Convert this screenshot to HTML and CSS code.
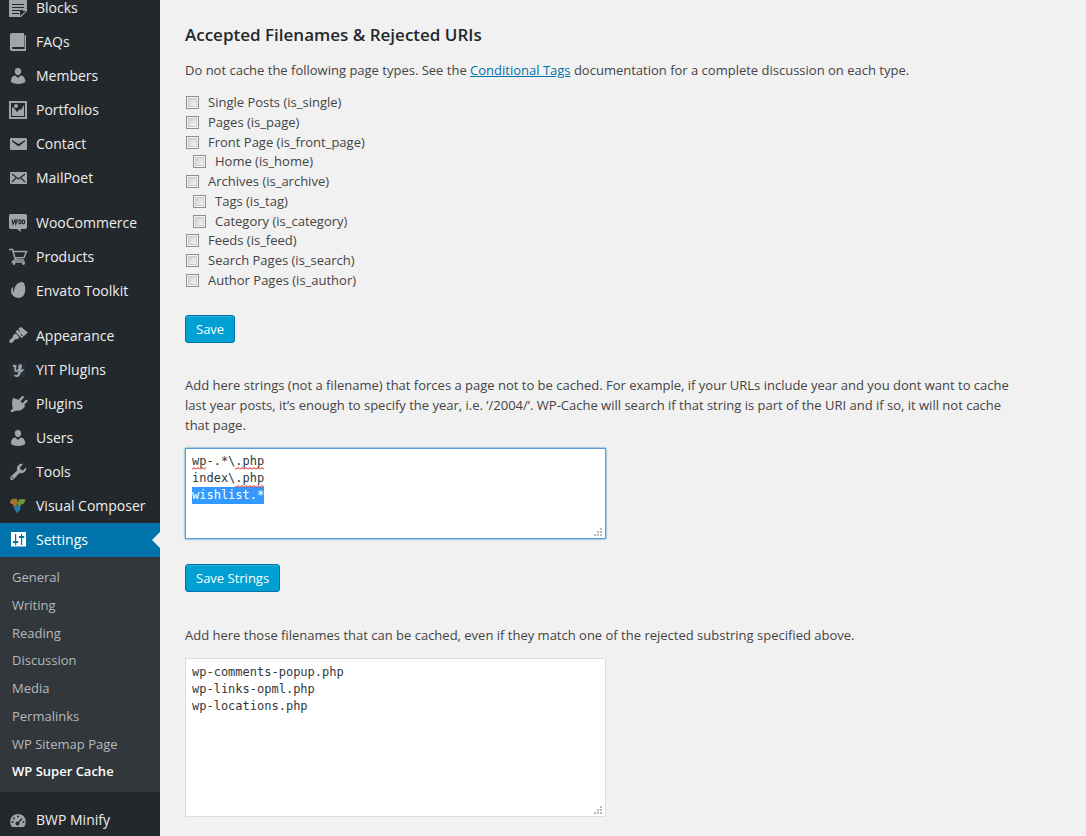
FILE: index.html
```html
<!DOCTYPE html>
<html lang="en">
<head>
<meta charset="utf-8">
<title>WP Super Cache Settings</title>
<link rel="stylesheet" href="styles.css">
</head>
<body>
<div class="admin">
<nav class="sidebar" aria-label="Main menu">
<ul class="menu">
<li><a href="#"><svg class="icon" viewBox="0 0 20 20"><path fill-rule="evenodd" d="M1 0h18v13l-6 6H1zM4 6v1h12V6zM4 9v1h12V9zM4 12v1h11v-1zM4 15v1h7v-1zM12 18v-5h6z"/></svg>Blocks</a></li>
<li><a href="#"><svg class="icon" viewBox="0 0 20 20"><path d="M4 1h12v14H5c-1.300 0-1.300 2 0 2h11.500V3H18v16H4c-1.500 0-2-1-2-2V3c0-1 .8-2 2-2z"/></svg>FAQs</a></li>
<li><a href="#"><svg class="icon" viewBox="0 0 20 20"><path d="M10 9.200c-1.900 0-3.200-1.800-3.200-3.900S8 2 10 2s3.200 1.200 3.200 3.300S11.900 9.200 10 9.200zM3 16c0-3.300 1-6.200 4.300-6.400L10 12l2.700-2.400C16 9.800 17.300 12.700 17.300 16c-3 2.600-11.300 2.600-14.300 0z"/></svg>Members</a></li>
<li><a href="#"><svg class="icon" viewBox="0 0 20 20"><path fill-rule="evenodd" d="M1 1h18v18H1zM3 3v14h14V3zM4 16V7l2 1 3 4 3-3 1 1 3-5v11zM8 4a2 2 0 1 1 0 4 2 2 0 0 1 0-4z"/></svg>Portfolios</a></li>
<li><a href="#"><svg class="icon" viewBox="0 0 20 20"><path fill-rule="evenodd" d="M3 4h14c1 0 2 .5 2 1.500v9c0 1-.5 1.500-1.500 1.500h-14C2.500 16 2 15.500 2 14.500v-9C2 4.500 2.300 4 3 4zM4 6v1.500l6.500 5L17 7.500V6l-6.500 4z"/></svg>Contact</a></li>
<li><a href="#"><svg class="icon" viewBox="0 0 20 20"><rect x="2" y="4" width="17" height="12" rx="1"/><path class="cut" d="m4 6 6.500 5L17 6M4 14l4-4M17 14l-4-4"/></svg>MailPoet</a></li>
<li class="separator" role="presentation"></li>
<li><a href="#"><svg class="icon" viewBox="0 0 20 20"><path d="M3 1h14c1.300 0 2 .8 2 2v11c0 1.300-.7 2-2 2h-4.500l.5 3-4-3H3c-1.300 0-2-.7-2-2V3c0-1.200.7-2 2-2z"/><path class="cut" d="M4 6.500 5 11l2-4 .8 4L9.500 6"/><ellipse class="cut" cx="12" cy="8.800" rx="1.200" ry="2"/><ellipse class="cut" cx="15.500" cy="8.800" rx="1.200" ry="2"/></svg>WooCommerce</a></li>
<li><a href="#"><svg class="icon line" viewBox="0 0 20 20"><path d="M1 2.500h3.500l3 10.500H16M5 4.500h13.500L16 10.500l-9 .500"/><path d="M6.500 13 4.500 15H17"/><circle cx="6" cy="16.500" r=".7"/><circle cx="15.500" cy="16.500" r=".7"/></svg>Products</a></li>
<li><a href="#"><svg class="icon" viewBox="0 0 20 20"><path d="M14.500 1c2 .8 3 4.500 2.700 8.500-.3 4.500-3 7.700-7 7.500-3.200-.2-6-2-6.800-5-.6-2.200-.3-4 .8-5.500.5-.6 1-.3.900.5-.2 2 .2 3.500 1 4.500C5.500 5.500 10 .5 14.500 1z"/></svg>Envato Toolkit</a></li>
<li class="separator" role="presentation"></li>
<li><a href="#"><svg class="icon" viewBox="0 0 20 20"><path d="M10.500 2.500 13 1l7 5.500-4 3.500h-2.500zM9.500 3.500l-2 2.500 6 6 2-1.300zM8 7.500l3.500 4-2 1.500-2.500.5-2.300 2.800c-.8.900-2 1-2.800.3s-.9-1.700-.2-2.600l3-2.800.7-2.500z"/></svg>Appearance</a></li>
<li><a href="#"><svg class="icon" viewBox="0 0 20 20"><rect class="tile" x="3" y="3" width="14" height="14"/><path class="brush" d="M5 6h2.500l-.3 3.500c0 2.500 3 2 3.800-.5l.5-3.500h1.500l-1 6.500c-.5 3.500-3.500 5-5.500 3.200M10 13.500l5.500-4"/></svg>YIT Plugins</a></li>
<li><a href="#"><svg class="icon" viewBox="0 0 20 20"><path d="M10.600 5.700 13.700 2.400c1.500-1.300 3 .2 1.800 1.700l-3 3.200 2 2 3-3.200c1.500-1.200 3 .3 1.700 1.700l-3.100 3.200 1.100 1-1.300 1.800c-2 2.700-5.300 3.500-8 2.700L4.500 18c-.8.600-2.300-.8-1.700-1.700L5 14.500C4 12 3.500 8 5 4z"/></svg>Plugins</a></li>
<li><a href="#"><svg class="icon" viewBox="0 0 20 20"><path d="M10 9.200c-1.900 0-3.200-1.800-3.200-3.900S8 2 10 2s3.200 1.200 3.200 3.300S11.900 9.200 10 9.200zM3 16c0-3.300 1-6.200 4.300-6.400L10 12l2.700-2.400C16 9.800 17.300 12.700 17.300 16c-3 2.600-11.300 2.600-14.300 0z"/></svg>Users</a></li>
<li><a href="#"><svg class="icon" viewBox="0 0 20 20"><path fill-rule="evenodd" d="M16.700 9.800c-1.400 1.500-3.500 1.800-5.200 1.100L5.700 17.300c-.9.900-2.200.9-3 .1s-.8-2.200.1-3L9.200 8.600c-.7-1.800-.4-3.900 1.100-5.300 1.400-1.400 3-1.800 4.700-1.200l-3 3.300.6 2.200 2.400.8 3.100-3.200c.6 1.600.1 3.200-1.400 4.600zM4.200 15a.8.800 0 1 0 .1 1.600.8.800 0 0 0-.1-1.600z"/></svg>Tools</a></li>
<li><a href="#"><svg class="icon" viewBox="0 0 20 20"><path fill="#a3752b" d="M2 6c0-3 4-4 7-3l1 4-2 4-3-.5V8C3 8 2 7.500 2 6z"/><path fill="#6d963a" d="M10 7c0-3 2-4.500 4.500-4l3.500.5-1 1c0 2.500-2 4-4 4l-1 2.500-2-1z"/><path fill="#217fae" d="M7 10c2-1 5-.5 5.500 2 .3 2-1 3-2.500 4L9 18l-1-3c-2-1-2.500-4-1-5z"/></svg>Visual Composer</a></li>
<li class="current"><a href="#" aria-current="true"><svg class="icon" viewBox="0 0 20 20"><path fill-rule="evenodd" d="M3 2h15v14.500H3zM7 4v7H5v2h2v2h1.200v-2h2v-2h-2V4zM13 4v2h-2v2h2v7h1.200V8h2V6h-2V4z"/></svg>Settings</a>
<ul class="submenu">
<li><a href="#">General</a></li>
<li><a href="#">Writing</a></li>
<li><a href="#">Reading</a></li>
<li><a href="#">Discussion</a></li>
<li><a href="#">Media</a></li>
<li><a href="#">Permalinks</a></li>
<li><a href="#">WP Sitemap Page</a></li>
<li><a href="#" class="active" aria-current="page">WP Super Cache</a></li>
</ul></li>
<li class="separator" role="presentation"></li>
<li><a href="#"><svg class="icon" viewBox="0 0 20 20"><path d="M4 17C.5 13 2 4 10 4s9.500 9 6 13z"/><path class="cut" d="m9.500 13.500 4.500-5"/><g class="dot"><circle cx="9.500" cy="13.500" r="2"/><circle cx="4.500" cy="12" r="1"/><circle cx="6" cy="8.500" r="1"/><circle cx="10" cy="6.500" r="1"/><circle cx="15.500" cy="12" r="1"/></g></svg>BWP Minify</a></li>
</ul>
</nav>
<main class="content">
<h3>Accepted Filenames &amp; Rejected URIs</h3>
<form class="types">
<p>Do not cache the following page types. See the <a href="#">Conditional Tags</a> documentation for a complete discussion on each type.</p>
<div class="checks">
<label><input type="checkbox">Single Posts (is_single)</label>
<label><input type="checkbox">Pages (is_page)</label>
<label><input type="checkbox">Front Page (is_front_page)</label>
<label class="nested"><input type="checkbox">Home (is_home)</label>
<label><input type="checkbox">Archives (is_archive)</label>
<label class="nested"><input type="checkbox">Tags (is_tag)</label>
<label class="nested"><input type="checkbox">Category (is_category)</label>
<label><input type="checkbox">Feeds (is_feed)</label>
<label><input type="checkbox">Search Pages (is_search)</label>
<label><input type="checkbox">Author Pages (is_author)</label>
</div>
<button type="button">Save</button>
</form>
<form class="strings">
<p><label for="rejected">Add here strings (not a filename) that forces a page not to be cached. For example, if your URLs include year and you dont want to cache last year posts, it’s enough to specify the year, i.e. ’/2004/’. WP-Cache will search if that string is part of the URI and if so, it will not cache that page.</label></p>
<div class="editor">
<textarea id="rejected" class="short" spellcheck="false">wp-.*\.php
index\.php
wishlist.*</textarea>
<svg class="spelling" viewBox="0 0 76 38" aria-hidden="true"><defs><pattern id="wave" width="4" height="3" patternUnits="userSpaceOnUse"><path d="M0 2.500 2 .5l2 2"/></pattern></defs><rect x="0" y="15" width="14" height="3"/><rect x="43" y="15" width="29" height="3"/><rect x="43" y="33" width="29" height="3"/></svg>
</div>
<button type="button">Save Strings</button>
</form>
<form class="accepted">
<p><label for="accepted">Add here those filenames that can be cached, even if they match one of the rejected substring specified above.</label></p>
<textarea id="accepted" class="tall" spellcheck="false">wp-comments-popup.php
wp-links-opml.php
wp-locations.php</textarea>
</form>
</main>
</div>
<script src="script.js"></script>
</body>
</html>
```
FILE: styles.css
```css
* { box-sizing: border-box; }
body {
  margin: 0;
  background: #f1f1f1;
  color: #444;
  font: 13px/20px "Open Sans", "Noto Sans", sans-serif;
}
.admin { display: flex; height: 100vh; overflow: hidden; }
.sidebar { flex: 0 0 160px; background: #23282d; }
.menu, .submenu { list-style: none; margin: 0; padding: 0; }
/* The menu is scrolled part-way past its first entry. */
.menu { margin-top: -9px; }
.menu > li > a {
  display: flex;
  align-items: center;
  gap: 8px;
  height: 34px;
  padding-left: 8px;
  color: #eee;
  font-size: 14px;
  text-decoration: none;
  white-space: nowrap;
}
.separator { height: 11px; }
.icon { flex: none; width: 20px; height: 20px; fill: #a0a5aa; }
.icon.line { fill: none; stroke: #a0a5aa; stroke-width: 1.5; }
.icon .cut { fill: none; stroke: #23282d; stroke-width: 1.2; }
.icon .dot { fill: #23282d; }
.icon .tile { fill: #26313a; }
.icon .brush { fill: none; stroke: #a0a5aa; stroke-width: 1.8; }
.menu > .current > a { position: relative; background: #0073aa; color: #fff; }
.current .icon { fill: #fff; }
.current > a::after {
  content: "";
  position: absolute;
  right: 0;
  top: 9px;
  border: 8px solid transparent;
  border-left: 0;
  border-right-color: #f1f1f1;
}
.submenu {
  display: grid;
  grid-auto-rows: 1fr;
  height: 235px;
  padding: 7px 0 6px;
  background: #32373c;
}
.submenu a {
  display: block;
  padding-left: 12px;
  color: #b4b9be;
  line-height: 27px;
  text-decoration: none;
}
.submenu .active { color: #fff; font-weight: 600; }

.content { flex: 1; min-width: 0; padding: 25px 64px 19px 25px; }
h3 { margin: 0 0 15px; color: #23282d; font-size: 17px; line-height: 20px; font-weight: 600; }
p { margin: 0 0 13px; }
p a { color: #0073aa; }
form { display: flex; flex-direction: column; align-items: flex-start; }
.types { margin-bottom: 32px; }
.strings { margin-bottom: 33px; }
.checks { display: grid; grid-auto-rows: 1fr; height: 197px; margin-bottom: 25px; line-height: 19px; }
.checks label { display: flex; align-items: center; gap: 9px; padding-left: 1px; }
.checks .nested { padding-left: 8px; }
input[type="checkbox"] {
  appearance: none;
  width: 13px;
  height: 13px;
  margin: 0;
  border: 1px solid #8e8f8f;
  background: linear-gradient(135deg, #c4c8cd, #f4f4f4 80%);
  box-shadow: inset 0 0 0 1px #f4f4f4, inset 0 0 0 2px #c8cacc;
}
button {
  height: 28px;
  padding: 0 10px;
  border: 1px solid #0073aa;
  border-radius: 3px;
  background: #00a0d2;
  box-shadow: inset 0 1px 0 #2ab4de;
  color: #fff;
  font: 13px/26px "Open Sans", "Noto Sans", sans-serif;
}
.editor { position: relative; display: flex; width: 421px; max-width: 100%; margin-bottom: 25px; }
textarea {
  width: 421px;
  max-width: 100%;
  margin: 0;
  padding: 4px 6px;
  border: 1px solid #ddd;
  border-radius: 0;
  outline: 0;
  background: #fff;
  color: #32373c;
  font: 12px/17px "DejaVu Sans Mono", monospace;
  overflow: hidden;
  resize: both;
}
textarea:focus { border-color: #5b9dd9; box-shadow: 0 0 2px #1e8cbe; }
textarea::selection { background: #3399ff; color: #fff; }
textarea::-webkit-resizer {
  background:
    linear-gradient(#bbb, #bbb) 4px 11px / 2px 2px,
    linear-gradient(#bbb, #bbb) 7px 11px / 2px 2px,
    linear-gradient(#bbb, #bbb) 10px 11px / 2px 2px,
    linear-gradient(#bbb, #bbb) 7px 8px / 2px 2px,
    linear-gradient(#bbb, #bbb) 10px 8px / 2px 2px,
    linear-gradient(#bbb, #bbb) 10px 5px / 2px 2px;
  background-repeat: no-repeat;
}
.short { height: 91px; }
.tall { height: 159px; padding-top: 5px; }
.spelling {
  position: absolute;
  left: 7px;
  top: 4px;
  width: 76px;
  height: 38px;
  pointer-events: none;
}
.spelling rect { fill: url(#wave); }
.spelling path { fill: none; stroke: #e00000; stroke-width: 1; }
```
FILE: script.js
```js
const rejected = document.getElementById("rejected");
const start = rejected.value.indexOf("wishlist");
rejected.focus();
rejected.setSelectionRange(start, rejected.value.length);
```
